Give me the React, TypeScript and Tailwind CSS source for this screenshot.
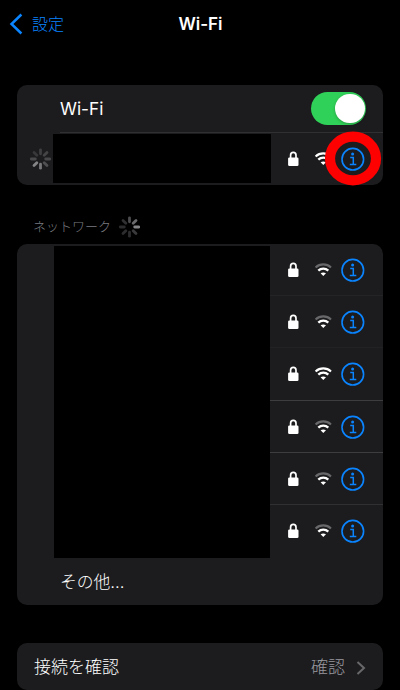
import React from "react";

const SPOKES = [0, 45, 90, 135, 180, 225, 270, 315];

function Spinner({ shades }: { shades: string[] }) {
  return (
    <svg width="22" height="22" viewBox="-11 -11 22 22" className="block shrink-0">
      {SPOKES.map((angle, i) => (
        <line
          key={angle}
          x1="0"
          y1="-5.2"
          x2="0"
          y2="-9.2"
          stroke={shades[i]}
          strokeWidth="2.8"
          strokeLinecap="round"
          transform={`translate(0.5 0) rotate(${angle})`}
        />
      ))}
    </svg>
  );
}

function Lock() {
  return (
    <svg width="12" height="16" viewBox="0 0 12 16" className="block shrink-0">
      <path d="M3.6 8V4.3a2.7 2.9 0 0 1 5.4 0V8" fill="none" stroke="#fff" strokeWidth="1.7" />
      <rect x="1.1" y="6.4" width="10.4" height="8.7" rx="1.3" fill="#fff" />
    </svg>
  );
}

function WifiIcon({ full }: { full?: boolean }) {
  return (
    <svg width="18" height="14" viewBox="0 0 18 14" className="block shrink-0">
      <path d="M1.6 4.4a11.4 11.4 0 0 1 15.4 0" fill="none" stroke={full ? "#fff" : "#68686b"} strokeWidth="2.1" />
      <path d="M4.3 7.6a7.2 7.2 0 0 1 10 0" fill="none" stroke="#fff" strokeWidth="2.3" />
      <path d="M6.6 10.3q2.7-1.8 5.4 0L9.3 13.1Z" fill="#fff" />
    </svg>
  );
}

function Info() {
  return (
    <svg width="24" height="24" viewBox="0 0 24 24" className="block shrink-0" fill="none" stroke="#0a84ff">
      <circle cx="11.8" cy="12.2" r="10.8" strokeWidth="1.6" />
      <circle cx="11.6" cy="7" r="1.5" fill="#0a84ff" stroke="none" />
      <path d="M9.2 10.6h3.1v6.8M8.8 17.4h6.5" strokeWidth="1.5" />
    </svg>
  );
}

function Accessories({ full }: { full?: boolean }) {
  return (
    <div className="ml-auto flex items-center pr-[18px]">
      <Lock />
      <span className="ml-[15px]">
        <WifiIcon full={full} />
      </span>
      <span className="ml-[9px]">
        <Info />
      </span>
    </div>
  );
}

const NETWORKS = [
  { full: false, line: "border-[#242426]" },
  { full: false, line: "border-[#222224]" },
  { full: true, line: "border-[#3d3d40]" },
  { full: false, line: "border-[#3d3d40]" },
  { full: false, line: "border-[#303033]" },
  { full: false, line: "border-transparent" },
];

export default function App() {
  return (
    <div className="h-[690px] w-[400px] overflow-hidden bg-black font-['Inter','Noto_Sans_CJK_JP',sans-serif] text-[17px] text-white">
      <header className="grid h-12 grid-cols-3 items-center">
        <div className="flex items-center pl-[9px] text-[#0a84ff]">
          <svg width="14" height="22" viewBox="0 0 14 22" fill="none" stroke="currentColor" strokeWidth="2.5">
            <path d="M12.4 1.5 2.5 11l9.9 9.5" />
          </svg>
          <span className="ml-[9px] text-[16px] font-light">設定</span>
        </div>
        <h1 className="pl-px pt-[2px] text-center text-[17px] font-semibold">Wi-Fi</h1>
      </header>

      <section className="mx-[17px] mt-[37px] h-[100px] rounded-[10px] bg-[#1c1c1e]">
        <div className="flex h-[47px] items-center pl-[43px] pr-[17px]">
          <span className="text-[17.2px]">Wi-Fi</span>
          <div className="ml-auto flex h-[33px] w-[55px] items-center justify-end rounded-full bg-[#30d158] pr-[1.5px]">
            <div className="size-[29.5px] rounded-full bg-white shadow-[0_1px_3px_rgba(0,0,0,0.25)]" />
          </div>
        </div>
        <div className="relative flex h-[53px] items-center pl-3">
          <div className="absolute left-[43px] right-0 top-0 h-px bg-[#303033]" />
          <Spinner shades={["#3f3f41", "#444446", "#48484a", "#505052", "#77777a", "#858588", "#4a4a4c", "#38383a"]} />
          <div className="ml-[2px] h-[49px] w-[218px] bg-black" />
          <Accessories full />
          <svg width="58" height="56" viewBox="0 0 58 56" className="absolute right-[1px] top-[-1px]">
            <ellipse cx="29" cy="27.5" rx="23" ry="21.8" fill="none" stroke="#ff0000" strokeWidth="10.2" />
          </svg>
        </div>
      </section>

      <div className="ml-[33px] mt-[31px] flex h-[22px] items-center text-[13px] font-light text-[#7c7c80]">
        <span>ネットワーク</span>
        <span className="ml-[7px]">
          <Spinner shades={["#4c4c4f", "#69696c", "#858588", "#3a3a3c", "#2c2c2e", "#2c2c2e", "#2c2c2e", "#303032"]} />
        </span>
      </div>

      <section className="mx-[17px] mt-[6px] h-[361px] rounded-[10px] bg-[#1c1c1e]">
        <div className="flex pl-[37px]">
          <div className="mt-[2px] h-[312px] w-[216px] bg-black" />
          <div className="grow">
            {NETWORKS.map((n, i) => (
              <div key={i} className={`flex h-[52.2px] items-center border-b pt-px ${n.line}`}>
                <Accessories full={n.full} />
              </div>
            ))}
          </div>
        </div>
        <div className="flex h-[48px] items-center pl-[43px] pt-[2px] text-[16.8px] font-light">その他...</div>
      </section>

      <section className="mx-[17px] mt-[38px] flex h-[47px] items-center rounded-[10px] bg-[#1c1c1e] pl-[17px] pr-[17px] pt-[2px] text-[17px] font-light">
        <span>接続を確認</span>
        <span className="ml-auto text-[#98989f]">確認</span>
        <svg width="10" height="14" viewBox="0 0 10 14" className="ml-[11px]" fill="none" stroke="#68686b" strokeWidth="2">
          <path d="m1.5 1 6.5 6-6.5 6" />
        </svg>
      </section>
    </div>
  );
}
